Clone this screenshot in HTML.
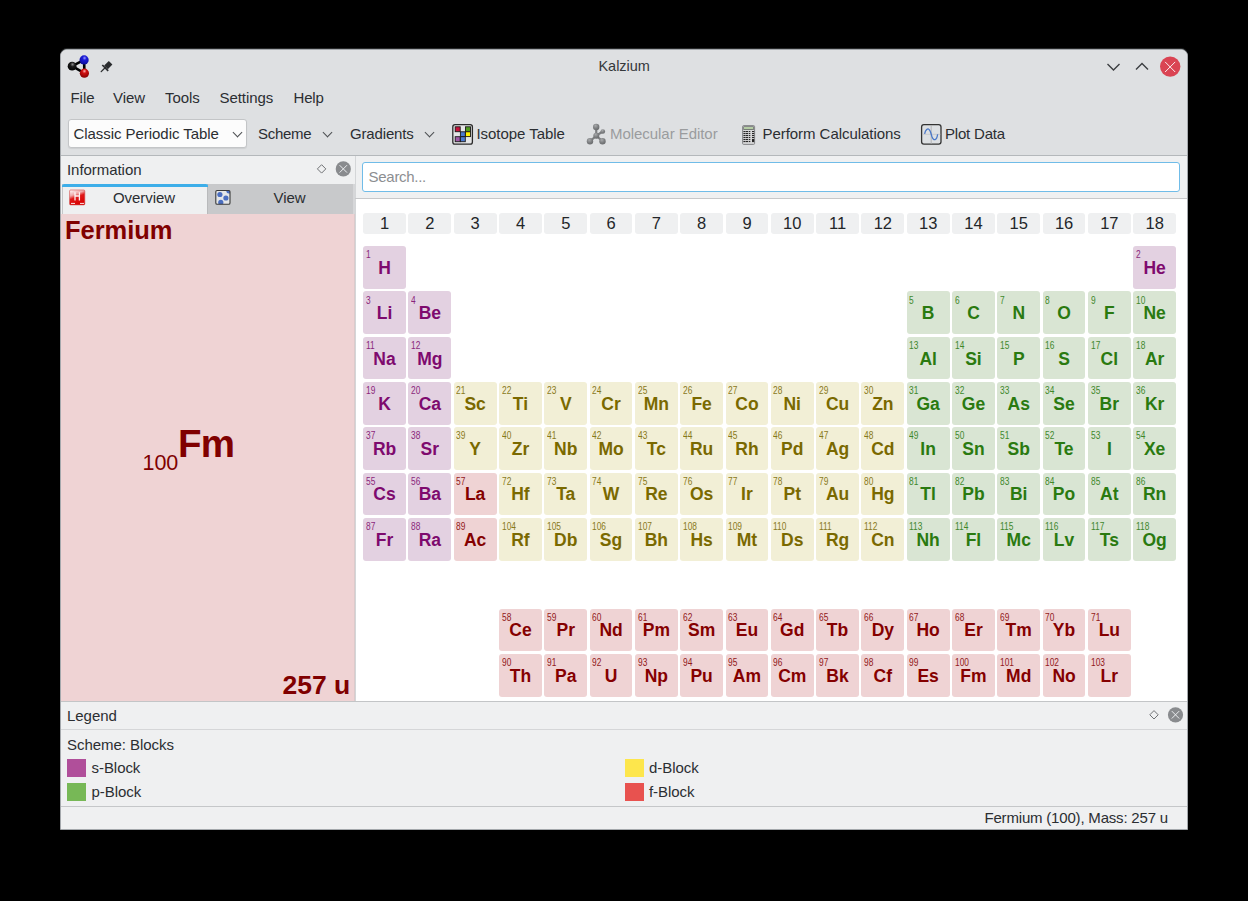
<!DOCTYPE html>
<html><head><meta charset="utf-8">
<style>
*{box-sizing:border-box;margin:0;padding:0}
html,body{width:1248px;height:901px;overflow:hidden;background:#000}
body{position:relative;font-family:"Liberation Sans",sans-serif;color:#2b2e32;font-size:15px;letter-spacing:-0.05px}
.a{position:absolute;white-space:nowrap}
#win{position:absolute;left:60px;top:48.6px;width:1128px;height:781.4px;background:#eff0f1;border:1px solid #a4a8ac;border-radius:7px 7px 0 0;overflow:hidden;box-shadow:0 -1px 0 rgba(110,114,118,0.35)}
#top{position:absolute;left:0;top:0;width:1126px;height:106.4px;background:#dee0e2;border-bottom:1px solid #b4b8bb}
.t{position:absolute;white-space:nowrap;line-height:1}
.chev{position:absolute;width:7px;height:7px;border-right:1.3px solid #4d4f52;border-bottom:1.3px solid #4d4f52;transform:rotate(45deg)}
.c{position:absolute;width:42.9px;height:42.8px;border-radius:3px}
.c i{position:absolute;left:2.7px;top:3.2px;font-style:normal;font-size:11px;line-height:1;letter-spacing:0;transform:scaleX(0.76);transform-origin:0 0;opacity:0.88}
.c b{position:absolute;left:0;width:100%;text-align:center;top:13.9px;font-size:17.5px;line-height:1;font-weight:bold;letter-spacing:0}
.s{background:#e3d1e1;color:#7e0a6e}
.p{background:#d9e5d3;color:#2a7a10}
.d{background:#f2efd6;color:#7a6900}
.f{background:#efd3d4;color:#850000}
.h{position:absolute;top:212.8px;width:42.9px;height:21.2px;border-radius:3px;background:#eff0f1;text-align:center;font-size:16.5px;line-height:21px;color:#232629}
</style></head><body>
<div id="win">
  <div id="top"></div>
</div>
<!-- title bar -->
<svg class="a" style="left:64px;top:53px" width="28" height="26" viewBox="64 53 28 26">
  <defs>
   <radialGradient id="gk" cx="0.55" cy="0.3" r="0.75"><stop offset="0" stop-color="#8a8a8a"/><stop offset="0.35" stop-color="#1a1a1a"/><stop offset="1" stop-color="#000"/></radialGradient>
   <radialGradient id="gb" cx="0.55" cy="0.3" r="0.75"><stop offset="0" stop-color="#9a9aff"/><stop offset="0.3" stop-color="#1c1cd8"/><stop offset="1" stop-color="#0a0a90"/></radialGradient>
   <radialGradient id="gr" cx="0.5" cy="0.28" r="0.75"><stop offset="0" stop-color="#ffb0b0"/><stop offset="0.3" stop-color="#d01010"/><stop offset="1" stop-color="#800000"/></radialGradient>
  </defs>
  <g stroke="#000" stroke-width="2.6"><line x1="72.1" y1="66.2" x2="84.1" y2="59.9"/><line x1="72.1" y1="66.2" x2="84.4" y2="73.2"/><line x1="84.1" y1="59.9" x2="84.4" y2="73.2"/></g>
  <circle cx="72.1" cy="66.2" r="4.4" fill="url(#gk)"/>
  <circle cx="84.1" cy="59.9" r="4.6" fill="url(#gb)"/>
  <circle cx="84.4" cy="73.2" r="4.6" fill="url(#gr)"/>
</svg>
<svg class="a" style="left:98px;top:57px" width="18" height="18" viewBox="98 57 18 18">
  <path d="M101.2 71.6 L105.6 67.2" stroke="#2a2c2e" stroke-width="1.3" stroke-linecap="round"/>
  <path d="M102.3 65 L108.2 70.9" stroke="#2a2c2e" stroke-width="1.7"/>
  <path d="M104.2 65.6 L108.8 61 L112.4 64.6 L107.8 69.2 Z" fill="#2a2c2e"/>
</svg>
<div class="t" style="left:598.5px;top:59px;font-size:14.5px;color:#35383b">Kalzium</div>
<svg class="a" style="left:1104px;top:60px" width="80" height="14" viewBox="1104 60 80 14"></svg>
<svg class="a" style="left:1100px;top:54px" width="90" height="26" viewBox="1100 54 90 26">
  <path d="M1107.5 64 L1113.5 70 L1119.5 64" fill="none" stroke="#3c3e41" stroke-width="1.4"/>
  <path d="M1136 69.5 L1142 63.5 L1148 69.5" fill="none" stroke="#3c3e41" stroke-width="1.4"/>
  <circle cx="1170.2" cy="66.6" r="10.2" fill="#da4453"/>
  <path d="M1165.1 61.9 L1175.2 72 M1175.2 61.9 L1165.1 72" stroke="#fbeef0" stroke-width="1"/>
</svg>
<!-- menu -->
<div class="t" style="left:70.5px;top:90px">File</div>
<div class="t" style="left:113px;top:90px">View</div>
<div class="t" style="left:165px;top:90px">Tools</div>
<div class="t" style="left:219.5px;top:90px">Settings</div>
<div class="t" style="left:293.5px;top:90px;letter-spacing:-0.2px">Help</div>
<!-- toolbar -->
<div class="a" style="left:68px;top:119px;width:179px;height:29px;background:#fcfcfc;border:1px solid #c3c5c7;border-radius:3px;box-shadow:0 1px 1px rgba(0,0,0,0.08)"></div>
<div class="t" style="left:73.5px;top:126px">Classic Periodic Table</div>
<div class="chev" style="left:233.5px;top:128.5px"></div>
<div class="t" style="left:258px;top:126px;letter-spacing:-0.3px">Scheme</div>
<div class="chev" style="left:323.5px;top:128.5px"></div>
<div class="t" style="left:350px;top:126px;letter-spacing:-0.15px">Gradients</div>
<div class="chev" style="left:426px;top:128.5px"></div>
<svg class="a" style="left:450px;top:122px" width="26" height="25" viewBox="450 122 26 25">
  <rect x="452.8" y="124.7" width="19.6" height="19.4" rx="2.2" fill="#e4e5e6" stroke="#2a2a2a" stroke-width="1.3"/>
  <g stroke="#1a1a1a" stroke-width="0.9">
  <rect x="455.2" y="126.8" width="5" height="4.9" fill="#c8103a"/>
  <rect x="465.5" y="126.8" width="5" height="4.9" fill="#4e9a1e"/>
  <rect x="460.4" y="131.8" width="4.9" height="4.8" fill="#4a7ad0"/>
  <rect x="465.5" y="131.8" width="5" height="4.8" fill="#fff000"/>
  <rect x="455.2" y="136.7" width="5" height="5" fill="#a05aa8"/>
  <rect x="460.4" y="136.7" width="4.9" height="5" fill="#4a7ad0"/>
  </g>
</svg>
<div class="t" style="left:476.5px;top:126px">Isotope Table</div>
<svg class="a" style="left:584px;top:121px" width="24" height="26" viewBox="584 121 24 26">
  <defs><radialGradient id="gm" cx="0.4" cy="0.3" r="0.7"><stop offset="0" stop-color="#a8aaac"/><stop offset="0.6" stop-color="#7c7e80"/><stop offset="1" stop-color="#6a6c6e"/></radialGradient></defs>
  <g stroke="#7c7e80" stroke-width="2.2"><path d="M596.3 135.7 L596.2 127 M596.3 135.7 L602.8 131.5 M596.3 135.7 L590 141.3 M596.3 135.7 L602.5 141.3"/></g>
  <circle cx="596.2" cy="127" r="3.2" fill="url(#gm)"/>
  <circle cx="602.8" cy="131.5" r="2.3" fill="url(#gm)"/>
  <circle cx="596.3" cy="135.7" r="3" fill="url(#gm)"/>
  <circle cx="590" cy="141.3" r="3.2" fill="url(#gm)"/>
  <circle cx="602.5" cy="141.3" r="3.2" fill="url(#gm)"/>
</svg>
<div class="t" style="left:610px;top:126px;color:#9a9c9e">Molecular Editor</div>
<svg class="a" style="left:740px;top:124px" width="17" height="22" viewBox="740 124 17 22">
  <rect x="742.6" y="125.6" width="12" height="18.8" rx="1" fill="#d8d9da" stroke="#7a7c7e" stroke-width="0.9"/>
  <rect x="743.4" y="126.4" width="10.4" height="3.5" fill="#5a5c5e"/>
  <rect x="744" y="127" width="9.2" height="2.2" fill="#b5cda5"/>
  <g fill="#262626"><rect x="743.4" y="131" width="2.2" height="1.1"/><rect x="746" y="131" width="2.1" height="1.1"/><rect x="748.8" y="131" width="1.5" height="1.1"/><rect x="752" y="131" width="2.2" height="1.1"/><rect x="743.4" y="133" width="2.2" height="1.1"/><rect x="746" y="133" width="2.1" height="1.1"/><rect x="748.8" y="133" width="1.5" height="1.1"/><rect x="752" y="133" width="2.2" height="1.1"/><rect x="743.4" y="135" width="2.2" height="1.1"/><rect x="746" y="135" width="2.1" height="1.1"/><rect x="748.8" y="135" width="1.5" height="1.1"/><rect x="752" y="135" width="2.2" height="1.1"/><rect x="743.4" y="137" width="2.2" height="1.1"/><rect x="746" y="137" width="2.1" height="1.1"/><rect x="748.8" y="137" width="1.5" height="1.1"/><rect x="752" y="137" width="2.2" height="1.1"/><rect x="743.4" y="139" width="2.2" height="1.1"/><rect x="746" y="139" width="2.1" height="1.1"/><rect x="748.8" y="139" width="1.5" height="1.1"/><rect x="743.4" y="141" width="2.2" height="1.1"/><rect x="746" y="141" width="2.1" height="1.1"/><rect x="748.8" y="141" width="1.5" height="1.1"/><rect x="752" y="139" width="2.2" height="3.1"/></g>
</svg>
<div class="t" style="left:762.5px;top:126px">Perform Calculations</div>
<svg class="a" style="left:918px;top:122px" width="26" height="25" viewBox="918 122 26 25">
  <rect x="921.6" y="124.6" width="19.4" height="19.5" rx="2.3" fill="#dde0e3" stroke="#333" stroke-width="1.3"/>
  <line x1="931.2" y1="125" x2="931.2" y2="144" stroke="#a9abad" stroke-width="0.8"/>
  <line x1="922" y1="134.3" x2="940.5" y2="134.3" stroke="#b9bbbd" stroke-width="0.6"/>
  <path d="M924.6 133.8 C925.6 129.5, 927.8 128.4, 928.8 129.2 C930.6 130.2, 931 134, 932 136.8 C933 139.4, 934 140, 935 139.6 C936.6 139, 937.4 136.5, 937.6 134.2" fill="none" stroke="#4a78c8" stroke-width="1.3"/>
</svg>
<div class="t" style="left:945px;top:126px;letter-spacing:-0.2px">Plot Data</div>

<!-- Information dock -->
<div class="t" style="left:67px;top:162px">Information</div>
<svg class="a" style="left:314px;top:159px" width="40" height="20" viewBox="314 159 40 20">
  <path d="M321.6 164.7 L325.8 168.9 L321.6 173.1 L317.4 168.9 Z" fill="none" stroke="#707275" stroke-width="1"/>
  <circle cx="343.3" cy="168.9" r="7.6" fill="#898b8e"/>
  <path d="M339.6 165.2 L347 172.6 M347 165.2 L339.6 172.6" stroke="#eceef0" stroke-width="1"/>
</svg>
<!-- tabs -->
<div class="a" style="left:207px;top:184px;width:148px;height:30px;background:#d6d7d9"></div>
<div class="a" style="left:207px;top:184px;width:146px;height:30px;background:#c8c9cb;border-left:1px solid #b9babc"></div>
<div class="a" style="left:62px;top:184px;width:145px;height:30px;background:#eff0f1;border-left:1px solid #c5c6c8"></div>
<div class="a" style="left:62px;top:184px;width:146px;height:2.6px;background:#3daee9;border-radius:2px 2px 0 0"></div>
<svg class="a" style="left:68px;top:188px" width="18" height="18" viewBox="68 188 18 18">
  <defs><linearGradient id="gh" x1="0.2" y1="0" x2="0.6" y2="1"><stop offset="0" stop-color="#fdf0f0"/><stop offset="0.3" stop-color="#f0a8a8"/><stop offset="0.5" stop-color="#e01818"/><stop offset="1" stop-color="#d80000"/></linearGradient></defs>
  <rect x="69.6" y="190" width="15.2" height="14.9" rx="1" fill="url(#gh)" stroke="#d04848" stroke-width="0.6"/>
  <path d="M75 192.2 V200.4 M79.4 192.2 V200.4 M75 196 H79.4" stroke="#fff" stroke-width="1.3" fill="none" opacity="0.92"/>
  <path d="M71 203.4 H75 M80 203.4 H84" stroke="#fff" stroke-width="0.9"/>
</svg>
<div class="t" style="left:113px;top:190px">Overview</div>
<svg class="a" style="left:213px;top:188px" width="20" height="19" viewBox="213 188 20 19">
  <defs><clipPath id="cv"><rect x="215.8" y="190.5" width="14.2" height="13.7"/></clipPath></defs>
  <rect x="215.8" y="190.5" width="14.2" height="13.7" rx="1.3" fill="#e4e6e8"/>
  <g clip-path="url(#cv)" fill="#4a6ec0"><circle cx="219.9" cy="194.5" r="2.6"/><circle cx="225.9" cy="198" r="2.6"/><circle cx="220.8" cy="202.4" r="2.6"/><circle cx="228.8" cy="191.2" r="2.4"/></g>
  <rect x="215.8" y="190.5" width="14.2" height="13.7" rx="1.3" fill="none" stroke="#3a3a3a" stroke-width="1.1"/>
</svg>
<div class="t" style="left:273.5px;top:190px">View</div>
<!-- pink panel -->
<div class="a" style="left:61px;top:214px;width:293px;height:487px;background:#efd3d4"></div>
<div class="a" style="left:354px;top:214px;width:1px;height:487px;background:#dccacb"></div>
<div class="t" style="left:65px;top:217.5px;font-size:25.5px;font-weight:bold;color:#800000">Fermium</div>
<div class="t" style="left:142.5px;top:453.2px;font-size:21.5px;color:#800000">100</div>
<div class="t" style="left:178px;top:424.5px;font-size:38.5px;font-weight:bold;color:#800000;letter-spacing:-0.8px">Fm</div>
<div class="t" style="left:282.5px;top:671.8px;font-size:26.5px;font-weight:bold;color:#800000">257 u</div>
<!-- divider -->
<div class="a" style="left:355px;top:156px;width:1px;height:545px;background:#d4d6d8"></div>
<!-- search -->
<div class="a" style="left:362px;top:162px;width:818px;height:30px;background:#fff;border:1.6px solid #70bce8;border-radius:3px"></div>
<div class="t" style="left:368.6px;top:169px;color:#8c8e91;letter-spacing:-0.3px">Search...</div>
<div class="a" style="left:355px;top:198px;width:832px;height:1px;background:#c7c8ca"></div>
<div class="a" style="left:356px;top:199px;width:831px;height:502px;background:#fff"></div>
<div class="h" style="left:363.10px">1</div>
<div class="h" style="left:408.40px">2</div>
<div class="h" style="left:453.70px">3</div>
<div class="h" style="left:499.00px">4</div>
<div class="h" style="left:544.30px">5</div>
<div class="h" style="left:589.60px">6</div>
<div class="h" style="left:634.90px">7</div>
<div class="h" style="left:680.20px">8</div>
<div class="h" style="left:725.50px">9</div>
<div class="h" style="left:770.80px">10</div>
<div class="h" style="left:816.10px">11</div>
<div class="h" style="left:861.40px">12</div>
<div class="h" style="left:906.70px">13</div>
<div class="h" style="left:952.00px">14</div>
<div class="h" style="left:997.30px">15</div>
<div class="h" style="left:1042.60px">16</div>
<div class="h" style="left:1087.90px">17</div>
<div class="h" style="left:1133.20px">18</div>
<div class="c s" style="left:363.10px;top:246.10px"><i>1</i><b>H</b></div>
<div class="c s" style="left:1133.20px;top:246.10px"><i>2</i><b>He</b></div>
<div class="c s" style="left:363.10px;top:291.40px"><i>3</i><b>Li</b></div>
<div class="c s" style="left:408.40px;top:291.40px"><i>4</i><b>Be</b></div>
<div class="c p" style="left:906.70px;top:291.40px"><i>5</i><b>B</b></div>
<div class="c p" style="left:952.00px;top:291.40px"><i>6</i><b>C</b></div>
<div class="c p" style="left:997.30px;top:291.40px"><i>7</i><b>N</b></div>
<div class="c p" style="left:1042.60px;top:291.40px"><i>8</i><b>O</b></div>
<div class="c p" style="left:1087.90px;top:291.40px"><i>9</i><b>F</b></div>
<div class="c p" style="left:1133.20px;top:291.40px"><i>10</i><b>Ne</b></div>
<div class="c s" style="left:363.10px;top:336.70px"><i>11</i><b>Na</b></div>
<div class="c s" style="left:408.40px;top:336.70px"><i>12</i><b>Mg</b></div>
<div class="c p" style="left:906.70px;top:336.70px"><i>13</i><b>Al</b></div>
<div class="c p" style="left:952.00px;top:336.70px"><i>14</i><b>Si</b></div>
<div class="c p" style="left:997.30px;top:336.70px"><i>15</i><b>P</b></div>
<div class="c p" style="left:1042.60px;top:336.70px"><i>16</i><b>S</b></div>
<div class="c p" style="left:1087.90px;top:336.70px"><i>17</i><b>Cl</b></div>
<div class="c p" style="left:1133.20px;top:336.70px"><i>18</i><b>Ar</b></div>
<div class="c s" style="left:363.10px;top:382.00px"><i>19</i><b>K</b></div>
<div class="c s" style="left:408.40px;top:382.00px"><i>20</i><b>Ca</b></div>
<div class="c d" style="left:453.70px;top:382.00px"><i>21</i><b>Sc</b></div>
<div class="c d" style="left:499.00px;top:382.00px"><i>22</i><b>Ti</b></div>
<div class="c d" style="left:544.30px;top:382.00px"><i>23</i><b>V</b></div>
<div class="c d" style="left:589.60px;top:382.00px"><i>24</i><b>Cr</b></div>
<div class="c d" style="left:634.90px;top:382.00px"><i>25</i><b>Mn</b></div>
<div class="c d" style="left:680.20px;top:382.00px"><i>26</i><b>Fe</b></div>
<div class="c d" style="left:725.50px;top:382.00px"><i>27</i><b>Co</b></div>
<div class="c d" style="left:770.80px;top:382.00px"><i>28</i><b>Ni</b></div>
<div class="c d" style="left:816.10px;top:382.00px"><i>29</i><b>Cu</b></div>
<div class="c d" style="left:861.40px;top:382.00px"><i>30</i><b>Zn</b></div>
<div class="c p" style="left:906.70px;top:382.00px"><i>31</i><b>Ga</b></div>
<div class="c p" style="left:952.00px;top:382.00px"><i>32</i><b>Ge</b></div>
<div class="c p" style="left:997.30px;top:382.00px"><i>33</i><b>As</b></div>
<div class="c p" style="left:1042.60px;top:382.00px"><i>34</i><b>Se</b></div>
<div class="c p" style="left:1087.90px;top:382.00px"><i>35</i><b>Br</b></div>
<div class="c p" style="left:1133.20px;top:382.00px"><i>36</i><b>Kr</b></div>
<div class="c s" style="left:363.10px;top:427.30px"><i>37</i><b>Rb</b></div>
<div class="c s" style="left:408.40px;top:427.30px"><i>38</i><b>Sr</b></div>
<div class="c d" style="left:453.70px;top:427.30px"><i>39</i><b>Y</b></div>
<div class="c d" style="left:499.00px;top:427.30px"><i>40</i><b>Zr</b></div>
<div class="c d" style="left:544.30px;top:427.30px"><i>41</i><b>Nb</b></div>
<div class="c d" style="left:589.60px;top:427.30px"><i>42</i><b>Mo</b></div>
<div class="c d" style="left:634.90px;top:427.30px"><i>43</i><b>Tc</b></div>
<div class="c d" style="left:680.20px;top:427.30px"><i>44</i><b>Ru</b></div>
<div class="c d" style="left:725.50px;top:427.30px"><i>45</i><b>Rh</b></div>
<div class="c d" style="left:770.80px;top:427.30px"><i>46</i><b>Pd</b></div>
<div class="c d" style="left:816.10px;top:427.30px"><i>47</i><b>Ag</b></div>
<div class="c d" style="left:861.40px;top:427.30px"><i>48</i><b>Cd</b></div>
<div class="c p" style="left:906.70px;top:427.30px"><i>49</i><b>In</b></div>
<div class="c p" style="left:952.00px;top:427.30px"><i>50</i><b>Sn</b></div>
<div class="c p" style="left:997.30px;top:427.30px"><i>51</i><b>Sb</b></div>
<div class="c p" style="left:1042.60px;top:427.30px"><i>52</i><b>Te</b></div>
<div class="c p" style="left:1087.90px;top:427.30px"><i>53</i><b>I</b></div>
<div class="c p" style="left:1133.20px;top:427.30px"><i>54</i><b>Xe</b></div>
<div class="c s" style="left:363.10px;top:472.60px"><i>55</i><b>Cs</b></div>
<div class="c s" style="left:408.40px;top:472.60px"><i>56</i><b>Ba</b></div>
<div class="c f" style="left:453.70px;top:472.60px"><i>57</i><b>La</b></div>
<div class="c f" style="left:499.00px;top:608.50px"><i>58</i><b>Ce</b></div>
<div class="c f" style="left:544.30px;top:608.50px"><i>59</i><b>Pr</b></div>
<div class="c f" style="left:589.60px;top:608.50px"><i>60</i><b>Nd</b></div>
<div class="c f" style="left:634.90px;top:608.50px"><i>61</i><b>Pm</b></div>
<div class="c f" style="left:680.20px;top:608.50px"><i>62</i><b>Sm</b></div>
<div class="c f" style="left:725.50px;top:608.50px"><i>63</i><b>Eu</b></div>
<div class="c f" style="left:770.80px;top:608.50px"><i>64</i><b>Gd</b></div>
<div class="c f" style="left:816.10px;top:608.50px"><i>65</i><b>Tb</b></div>
<div class="c f" style="left:861.40px;top:608.50px"><i>66</i><b>Dy</b></div>
<div class="c f" style="left:906.70px;top:608.50px"><i>67</i><b>Ho</b></div>
<div class="c f" style="left:952.00px;top:608.50px"><i>68</i><b>Er</b></div>
<div class="c f" style="left:997.30px;top:608.50px"><i>69</i><b>Tm</b></div>
<div class="c f" style="left:1042.60px;top:608.50px"><i>70</i><b>Yb</b></div>
<div class="c f" style="left:1087.90px;top:608.50px"><i>71</i><b>Lu</b></div>
<div class="c d" style="left:499.00px;top:472.60px"><i>72</i><b>Hf</b></div>
<div class="c d" style="left:544.30px;top:472.60px"><i>73</i><b>Ta</b></div>
<div class="c d" style="left:589.60px;top:472.60px"><i>74</i><b>W</b></div>
<div class="c d" style="left:634.90px;top:472.60px"><i>75</i><b>Re</b></div>
<div class="c d" style="left:680.20px;top:472.60px"><i>76</i><b>Os</b></div>
<div class="c d" style="left:725.50px;top:472.60px"><i>77</i><b>Ir</b></div>
<div class="c d" style="left:770.80px;top:472.60px"><i>78</i><b>Pt</b></div>
<div class="c d" style="left:816.10px;top:472.60px"><i>79</i><b>Au</b></div>
<div class="c d" style="left:861.40px;top:472.60px"><i>80</i><b>Hg</b></div>
<div class="c p" style="left:906.70px;top:472.60px"><i>81</i><b>Tl</b></div>
<div class="c p" style="left:952.00px;top:472.60px"><i>82</i><b>Pb</b></div>
<div class="c p" style="left:997.30px;top:472.60px"><i>83</i><b>Bi</b></div>
<div class="c p" style="left:1042.60px;top:472.60px"><i>84</i><b>Po</b></div>
<div class="c p" style="left:1087.90px;top:472.60px"><i>85</i><b>At</b></div>
<div class="c p" style="left:1133.20px;top:472.60px"><i>86</i><b>Rn</b></div>
<div class="c s" style="left:363.10px;top:517.90px"><i>87</i><b>Fr</b></div>
<div class="c s" style="left:408.40px;top:517.90px"><i>88</i><b>Ra</b></div>
<div class="c f" style="left:453.70px;top:517.90px"><i>89</i><b>Ac</b></div>
<div class="c f" style="left:499.00px;top:653.80px"><i>90</i><b>Th</b></div>
<div class="c f" style="left:544.30px;top:653.80px"><i>91</i><b>Pa</b></div>
<div class="c f" style="left:589.60px;top:653.80px"><i>92</i><b>U</b></div>
<div class="c f" style="left:634.90px;top:653.80px"><i>93</i><b>Np</b></div>
<div class="c f" style="left:680.20px;top:653.80px"><i>94</i><b>Pu</b></div>
<div class="c f" style="left:725.50px;top:653.80px"><i>95</i><b>Am</b></div>
<div class="c f" style="left:770.80px;top:653.80px"><i>96</i><b>Cm</b></div>
<div class="c f" style="left:816.10px;top:653.80px"><i>97</i><b>Bk</b></div>
<div class="c f" style="left:861.40px;top:653.80px"><i>98</i><b>Cf</b></div>
<div class="c f" style="left:906.70px;top:653.80px"><i>99</i><b>Es</b></div>
<div class="c f" style="left:952.00px;top:653.80px"><i>100</i><b>Fm</b></div>
<div class="c f" style="left:997.30px;top:653.80px"><i>101</i><b>Md</b></div>
<div class="c f" style="left:1042.60px;top:653.80px"><i>102</i><b>No</b></div>
<div class="c f" style="left:1087.90px;top:653.80px"><i>103</i><b>Lr</b></div>
<div class="c d" style="left:499.00px;top:517.90px"><i>104</i><b>Rf</b></div>
<div class="c d" style="left:544.30px;top:517.90px"><i>105</i><b>Db</b></div>
<div class="c d" style="left:589.60px;top:517.90px"><i>106</i><b>Sg</b></div>
<div class="c d" style="left:634.90px;top:517.90px"><i>107</i><b>Bh</b></div>
<div class="c d" style="left:680.20px;top:517.90px"><i>108</i><b>Hs</b></div>
<div class="c d" style="left:725.50px;top:517.90px"><i>109</i><b>Mt</b></div>
<div class="c d" style="left:770.80px;top:517.90px"><i>110</i><b>Ds</b></div>
<div class="c d" style="left:816.10px;top:517.90px"><i>111</i><b>Rg</b></div>
<div class="c d" style="left:861.40px;top:517.90px"><i>112</i><b>Cn</b></div>
<div class="c p" style="left:906.70px;top:517.90px"><i>113</i><b>Nh</b></div>
<div class="c p" style="left:952.00px;top:517.90px"><i>114</i><b>Fl</b></div>
<div class="c p" style="left:997.30px;top:517.90px"><i>115</i><b>Mc</b></div>
<div class="c p" style="left:1042.60px;top:517.90px"><i>116</i><b>Lv</b></div>
<div class="c p" style="left:1087.90px;top:517.90px"><i>117</i><b>Ts</b></div>
<div class="c p" style="left:1133.20px;top:517.90px"><i>118</i><b>Og</b></div>
<!-- legend -->
<div class="a" style="left:61px;top:701px;width:1126px;height:1px;background:#c3c5c7"></div>
<div class="t" style="left:67px;top:708px">Legend</div>
<svg class="a" style="left:1145px;top:705px" width="40" height="20" viewBox="1145 705 40 20">
  <path d="M1154 710.6 L1158.2 714.8 L1154 719 L1149.8 714.8 Z" fill="none" stroke="#707275" stroke-width="1"/>
  <circle cx="1175.5" cy="714.8" r="7.6" fill="#898b8e"/>
  <path d="M1171.8 711.1 L1179.2 718.5 M1179.2 711.1 L1171.8 718.5" stroke="#eceef0" stroke-width="1"/>
</svg>
<div class="a" style="left:61px;top:729px;width:1126px;height:1px;background:#d5d6d8"></div>
<div class="t" style="left:67px;top:736.5px">Scheme: Blocks</div>
<div class="a" style="left:67px;top:759px;width:19px;height:18px;background:#b04f9a"></div>
<div class="t" style="left:91.5px;top:760px">s-Block</div>
<div class="a" style="left:67px;top:783px;width:19px;height:17.5px;background:#77b856"></div>
<div class="t" style="left:91.5px;top:784px">p-Block</div>
<div class="a" style="left:624.5px;top:759px;width:19px;height:18px;background:#fde64c"></div>
<div class="t" style="left:649px;top:760px">d-Block</div>
<div class="a" style="left:624.5px;top:783px;width:19px;height:17.5px;background:#e8524f"></div>
<div class="t" style="left:649px;top:784px">f-Block</div>
<div class="a" style="left:61px;top:806px;width:1126px;height:1px;background:#c5c7c9"></div>
<div class="t" style="left:984.5px;top:810px;letter-spacing:-0.19px">Fermium (100), Mass: 257 u</div>
</body></html>
